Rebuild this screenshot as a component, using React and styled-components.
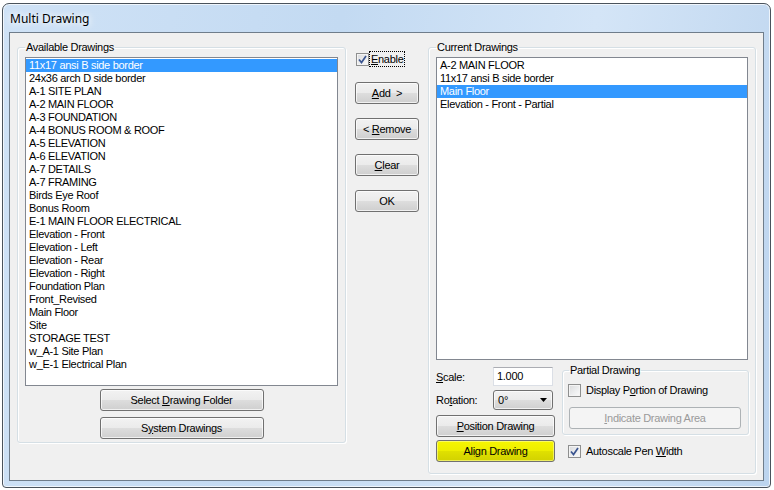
import React from 'react';
import styled, { createGlobalStyle, css } from 'styled-components';

const GlobalStyle = createGlobalStyle`
  html, body {
    margin: 0;
    background: #ffffff;
  }
  body {
    font-family: "Liberation Sans", Arial, sans-serif;
    font-size: 11px;
    color: #000;
  }
`;

const Desktop = styled.div`
  width: 774px;
  height: 490px;
  overflow: hidden;
  padding: 3px 0 0 2px;
  box-sizing: border-box;
`;

const Window = styled.div`
  box-sizing: border-box;
  width: 769px;
  height: 485px;
  border: 1px solid #4a535c;
  border-radius: 7px 7px 4px 4px;
  background: linear-gradient(100deg, #cfe2f6 0%, #c3daf2 40%, #d4e5f7 70%, #bcd4ee 100%);
  box-shadow: inset 0 0 0 1px rgba(255, 255, 255, 0.7);
  padding: 0 6px 6px 6px;
  display: flex;
  flex-direction: column;
`;

const TitleBar = styled.div`
  height: 28px;
  display: flex;
  align-items: center;
  padding-left: 1px;
  font-family: "Noto Sans", "DejaVu Sans", sans-serif;
  font-size: 12px;
  color: #000;
  text-shadow: 0 0 6px #fff, 0 0 10px #fff;
`;

const Client = styled.div`
  flex: 1;
  border: 1px solid #6f7d8b;
  background: #f0f0f0;
  display: flex;
  align-items: flex-start;
  padding: 8px 7px 0 7px;
  gap: 9px;
`;

const Group = styled.fieldset`
  margin: ${p => p.$mt || 0}px 0 0 0;
  padding: ${p => p.$pad};
  border: 1px solid #d5dfe5;
  border-radius: 3px;
  box-shadow: inset 1px 1px 0 #fff, 1px 1px 0 #fff;
  width: ${p => p.$w}px;
  box-sizing: border-box;
  min-width: 0;
  display: flex;
  flex-direction: column;
`;

const Legend = styled.legend`
  padding: 0 1px;
  margin-left: ${p => p.$ml || 0}px;
  line-height: 13px;
  letter-spacing: -0.3px;
`;

const ListBox = styled.div`
  margin-top: 3px;
  height: ${p => p.$h}px;
  box-sizing: border-box;
  border: 1px solid #828790;
  background: #fff;
  padding-top: 1px;
`;

const Item = styled.div`
  height: 13px;
  line-height: 13px;
  padding-left: 3px;
  letter-spacing: -0.3px;
  white-space: nowrap;
  ${p => p.$sel && css`
    background: #3399ff;
    color: #fff;
  `}
`;

const Btn = styled.button`
  box-sizing: border-box;
  width: ${p => p.$w}px;
  height: ${p => p.$h || 22}px;
  margin-top: ${p => p.$mt || 0}px;
  padding: 0;
  font-family: "Liberation Sans", Arial, sans-serif;
  font-size: 11px;
  letter-spacing: -0.3px;
  color: #000;
  border: 1px solid #707070;
  border-radius: 3px;
  background: linear-gradient(#f2f2f2 0%, #ebebeb 48%, #dddddd 52%, #cfcfcf 100%);
  box-shadow: inset 0 0 0 1px rgba(255, 255, 255, 0.7);
  ${p => p.$yellow && css`
    background: linear-gradient(#f6f600 0%, #eeee00 48%, #e0e000 52%, #d2d200 100%);
    box-shadow: inset 0 0 0 1px rgba(255, 255, 160, 0.6);
  `}
  ${p => p.disabled && css`
    border-color: #adb2b5;
    background: #f4f4f4;
    color: #9a9a9a;
    box-shadow: none;
  `}
`;

const U = styled.span`
  text-decoration: underline;
  text-underline-offset: 1px;
`;

const Middle = styled.div`
  width: 64px;
  margin-top: 10px;
  display: flex;
  flex-direction: column;
  gap: 14px;
`;

const CheckRow = styled.label`
  display: flex;
  align-items: center;
  height: ${p => p.$h || 14}px;
  margin: ${p => p.$m || '0'};
  letter-spacing: -0.3px;
  white-space: nowrap;
`;

const Box = styled.span`
  box-sizing: border-box;
  width: 13px;
  height: 13px;
  flex: none;
  border: 1px solid #8e8f8f;
  background: linear-gradient(135deg, #d9dadc 0%, #eeeff0 60%, #fafafa 100%);
  box-shadow: inset 0 0 0 1px #f4f4f4;
  display: flex;
  align-items: center;
  justify-content: center;
`;

const CheckText = styled.span`
  margin-left: ${p => p.$ml || 4}px;
  padding: 1px 1px;
  ${p => p.$focus && css`
    outline: 1px dotted #000;
    outline-offset: 0;
  `}
`;

const ButtonStack = styled.div`
  display: flex;
  flex-direction: column;
  gap: 14px;
  margin-top: 1px;
`;

const Bottom = styled.div`
  display: flex;
  align-items: flex-start;
  gap: 7px;
  margin-top: 7px;
`;

const LeftCol = styled.div`
  width: 119px;
  display: flex;
  flex-direction: column;
`;

const FieldRow = styled.div`
  display: flex;
  align-items: center;
  height: ${p => p.$h}px;
  margin-top: ${p => p.$mt || 0}px;
`;

const FieldLabel = styled.span`
  width: 57px;
  letter-spacing: -0.3px;
`;

const TextBox = styled.div`
  box-sizing: border-box;
  width: 60px;
  height: 19px;
  border: 1px solid #dbdfe6;
  border-top-color: #abadb3;
  background: #fff;
  padding-left: 3px;
  line-height: 17px;
  letter-spacing: -0.3px;
`;

const Combo = styled.div`
  box-sizing: border-box;
  width: 60px;
  height: 20px;
  border: 1px solid #707070;
  border-radius: 3px;
  background: linear-gradient(#f2f2f2 0%, #ebebeb 48%, #dddddd 52%, #cfcfcf 100%);
  box-shadow: inset 0 0 0 1px rgba(255, 255, 255, 0.7);
  display: flex;
  align-items: center;
  justify-content: space-between;
  padding: 0 5px 0 4px;
`;

const RightCol = styled.div`
  display: flex;
  flex-direction: column;
`;

const Check = ({ checked }) => (
  <Box>
    {checked && (
      <svg width="9" height="9" viewBox="0 0 9 9">
        <path d="M1 4.5 L3.5 7.5 L8 1" fill="none" stroke="#3b5590" strokeWidth="1.7" />
      </svg>
    )}
  </Box>
);

const available = [
  '11x17 ansi B side border',
  '24x36 arch D side border',
  'A-1 SITE PLAN',
  'A-2 MAIN FLOOR',
  'A-3 FOUNDATION',
  'A-4 BONUS ROOM & ROOF',
  'A-5 ELEVATION',
  'A-6 ELEVATION',
  'A-7 DETAILS',
  'A-7 FRAMING',
  'Birds Eye Roof',
  'Bonus Room',
  'E-1 MAIN FLOOR ELECTRICAL',
  'Elevation - Front',
  'Elevation - Left',
  'Elevation - Rear',
  'Elevation - Right',
  'Foundation Plan',
  'Front_Revised',
  'Main Floor',
  'Site',
  'STORAGE TEST',
  'w_A-1 Site Plan',
  'w_E-1 Electrical Plan',
];

const current = [
  'A-2 MAIN FLOOR',
  '11x17 ansi B side border',
  'Main Floor',
  'Elevation - Front - Partial',
];

export default function App() {
  return (
    <Desktop>
      <GlobalStyle />
      <Window>
        <TitleBar>Multi Drawing</TitleBar>
        <Client>
          <Group $w={329} $pad="0 7px 3px 7px">
            <Legend>Available Drawings</Legend>
            <ListBox $h={329}>
              {available.map((name, i) => (
                <Item key={name} $sel={i === 0}>{name}</Item>
              ))}
            </ListBox>
            <Btn $w={164} $mt={3} style={{ alignSelf: 'center' }}>
              Select <U>D</U>rawing Folder
            </Btn>
            <Btn $w={164} $mt={6} style={{ alignSelf: 'center' }}>
              S<U>y</U>stem Drawings
            </Btn>
          </Group>

          <Middle>
            <CheckRow $h={16} $m="0 0 0 1px">
              <Check checked />
              <CheckText $ml={1} $focus>
                <U>E</U>nable
              </CheckText>
            </CheckRow>
            <ButtonStack>
              <Btn $w={64}><U>A</U>dd &nbsp;&gt;</Btn>
              <Btn $w={64}>&lt; <U>R</U>emove</Btn>
              <Btn $w={64}><U>C</U>lear</Btn>
              <Btn $w={64}>OK</Btn>
            </ButtonStack>
          </Middle>

          <Group $w={328} $pad="0 7px 11px 7px">
            <Legend>Current Drawings</Legend>
            <ListBox $h={303}>
              {current.map((name, i) => (
                <Item key={name} $sel={i === 2}>{name}</Item>
              ))}
            </ListBox>
            <Bottom>
              <LeftCol>
                <FieldRow $h={19}>
                  <FieldLabel><U>S</U>cale:</FieldLabel>
                  <TextBox>1.000</TextBox>
                </FieldRow>
                <FieldRow $h={20} $mt={4}>
                  <FieldLabel>Ro<U>t</U>ation:</FieldLabel>
                  <Combo>
                    <span>0°</span>
                    <svg width="7" height="4" viewBox="0 0 7 4">
                      <path d="M0 0 H7 L3.5 4 Z" fill="#000" />
                    </svg>
                  </Combo>
                </FieldRow>
                <Btn $w={119} $mt={5}><U>P</U>osition Drawing</Btn>
                <Btn $w={119} $mt={3} $yellow>Ali<U>g</U>n Drawing</Btn>
              </LeftCol>
              <RightCol>
                <Group $w={187} $mt={-3} $pad="0 7px 5px 5px">
                  <Legend $ml={1}>Partial Drawing</Legend>
                  <CheckRow $m="6px 0 0 0">
                    <Check />
                    <CheckText>Display P<U>o</U>rtion of Drawing</CheckText>
                  </CheckRow>
                  <Btn $w={172} $mt={10} disabled style={{ marginLeft: 1 }}>
                    <U>I</U>ndicate Drawing Area
                  </Btn>
                </Group>
                <CheckRow $m="9px 0 0 6px">
                  <Check checked />
                  <CheckText>Autoscale Pen <U>W</U>idth</CheckText>
                </CheckRow>
              </RightCol>
            </Bottom>
          </Group>
        </Client>
      </Window>
    </Desktop>
  );
}
